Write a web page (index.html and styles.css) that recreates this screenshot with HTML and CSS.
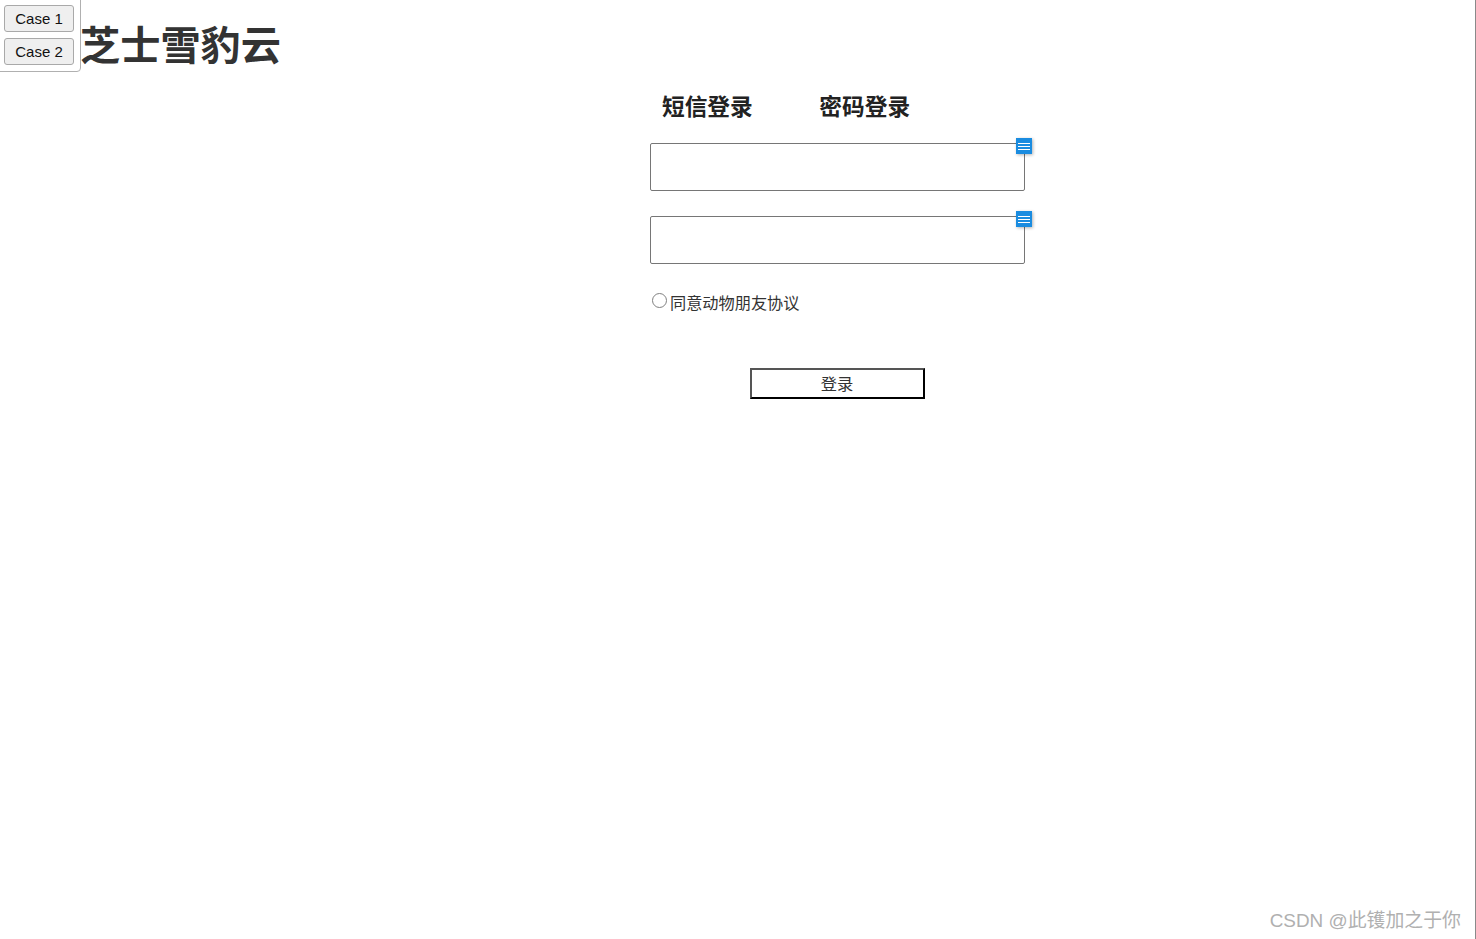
FILE: index.html
```html
<!DOCTYPE html>
<html lang="zh-CN">
<head>
<meta charset="utf-8">
<title>芝士雪豹云</title>
<link rel="stylesheet" href="styles.css">
</head>
<body>
<div class="page">
  <div class="switcher">
    <button class="case-btn" type="button">Case 1</button>
    <button class="case-btn" type="button">Case 2</button>
  </div>
  <h1 class="brand">芝士雪豹云</h1>
  <main class="login">
    <div class="tabs">
      <span class="tab">短信登录</span>
      <span class="tab">密码登录</span>
    </div>
    <div class="field">
      <input class="text-input" type="text">
      <span class="ext-icon"><i></i><i></i><i></i></span>
    </div>
    <div class="field">
      <input class="text-input" type="text">
      <span class="ext-icon"><i></i><i></i><i></i></span>
    </div>
    <label class="agree"><input class="radio" type="radio"><span>同意动物朋友协议</span></label>
    <div class="submit-row"><button class="submit" type="button">登录</button></div>
  </main>
  <div class="watermark">CSDN @此镬加之于你</div>
</div>
</body>
</html>
```
FILE: styles.css
```css
* { box-sizing: border-box; }
html, body { margin: 0; height: 100%; background: #fff; }
body { font-family: "Liberation Sans", "Noto Sans CJK SC", sans-serif; color: #333; overflow: hidden; }
.page { position: relative; height: 939px; border-right: 1px solid #8a8a8a; padding-left: 80px; }
.switcher {
  position: absolute; left: -1px; top: -1px; width: 82px; height: 73px;
  border: 1px solid #b0b0b0; border-radius: 0 0 4px 0; background: #fff;
  padding: 5px 0 0 4px; display: flex; flex-direction: column; gap: 6px;
}
.case-btn {
  width: 70px; height: 27px; padding: 0; font: 15px "Liberation Sans", sans-serif; color: #111;
  background: #efefef; border: 1px solid #a9a9a9; border-radius: 3px;
}
.brand { margin: 0; padding-top: 23px; font-size: 40.2px; line-height: 47px; font-weight: 700; color: #333; }
.login { width: 375px; margin-left: 570px; }
.tabs { margin-top: 23px; height: 30px; display: flex; gap: 66.6px; padding-left: 12px; }
.tab { font-size: 22.7px; line-height: 29px; font-weight: 700; color: #222; white-space: nowrap; }
.field { position: relative; margin-top: 25px; height: 48px; }
.tabs + .field { margin-top: 20px; }
.text-input { display: block; width: 375px; height: 48px; border: 1px solid #767676; border-radius: 2px; background: #fff; outline: 0; padding: 0; }
.ext-icon {
  position: absolute; top: -5px; right: -7px; width: 16px; height: 16px; background: #1a8ce0;
  box-shadow: 1px 1px 3px rgba(0,0,0,.3); display: flex; flex-direction: column; justify-content: center; gap: 2px; padding: 0 2px;
}
.ext-icon i { display: block; height: 1px; background: #fff; }
.agree { display: flex; align-items: flex-start; margin-top: 28px; height: 25px; font-size: 16.2px; color: #333; }
.radio {
  appearance: none; width: 15px; height: 15px; margin: 1px 3px 0 2px; flex: none;
  border: 1.5px solid #808080; border-radius: 50%; background: #fff;
}
.agree span { margin-top: 1px; line-height: 20px; }
.submit-row { margin-top: 51px; padding-left: 100px; }
.submit {
  display: block; width: 175px; height: 31px; padding: 0 1px 2px 0; background: #fff; color: #333;
  border: 2px solid; border-color: #555 #000 #000 #555; font: 16.3px "Liberation Sans", "Noto Sans CJK SC", sans-serif;
}
.watermark { position: absolute; right: 14px; bottom: 6px; font-size: 18.9px; line-height: 24px; color: #b0b0b0; white-space: nowrap; }
```
